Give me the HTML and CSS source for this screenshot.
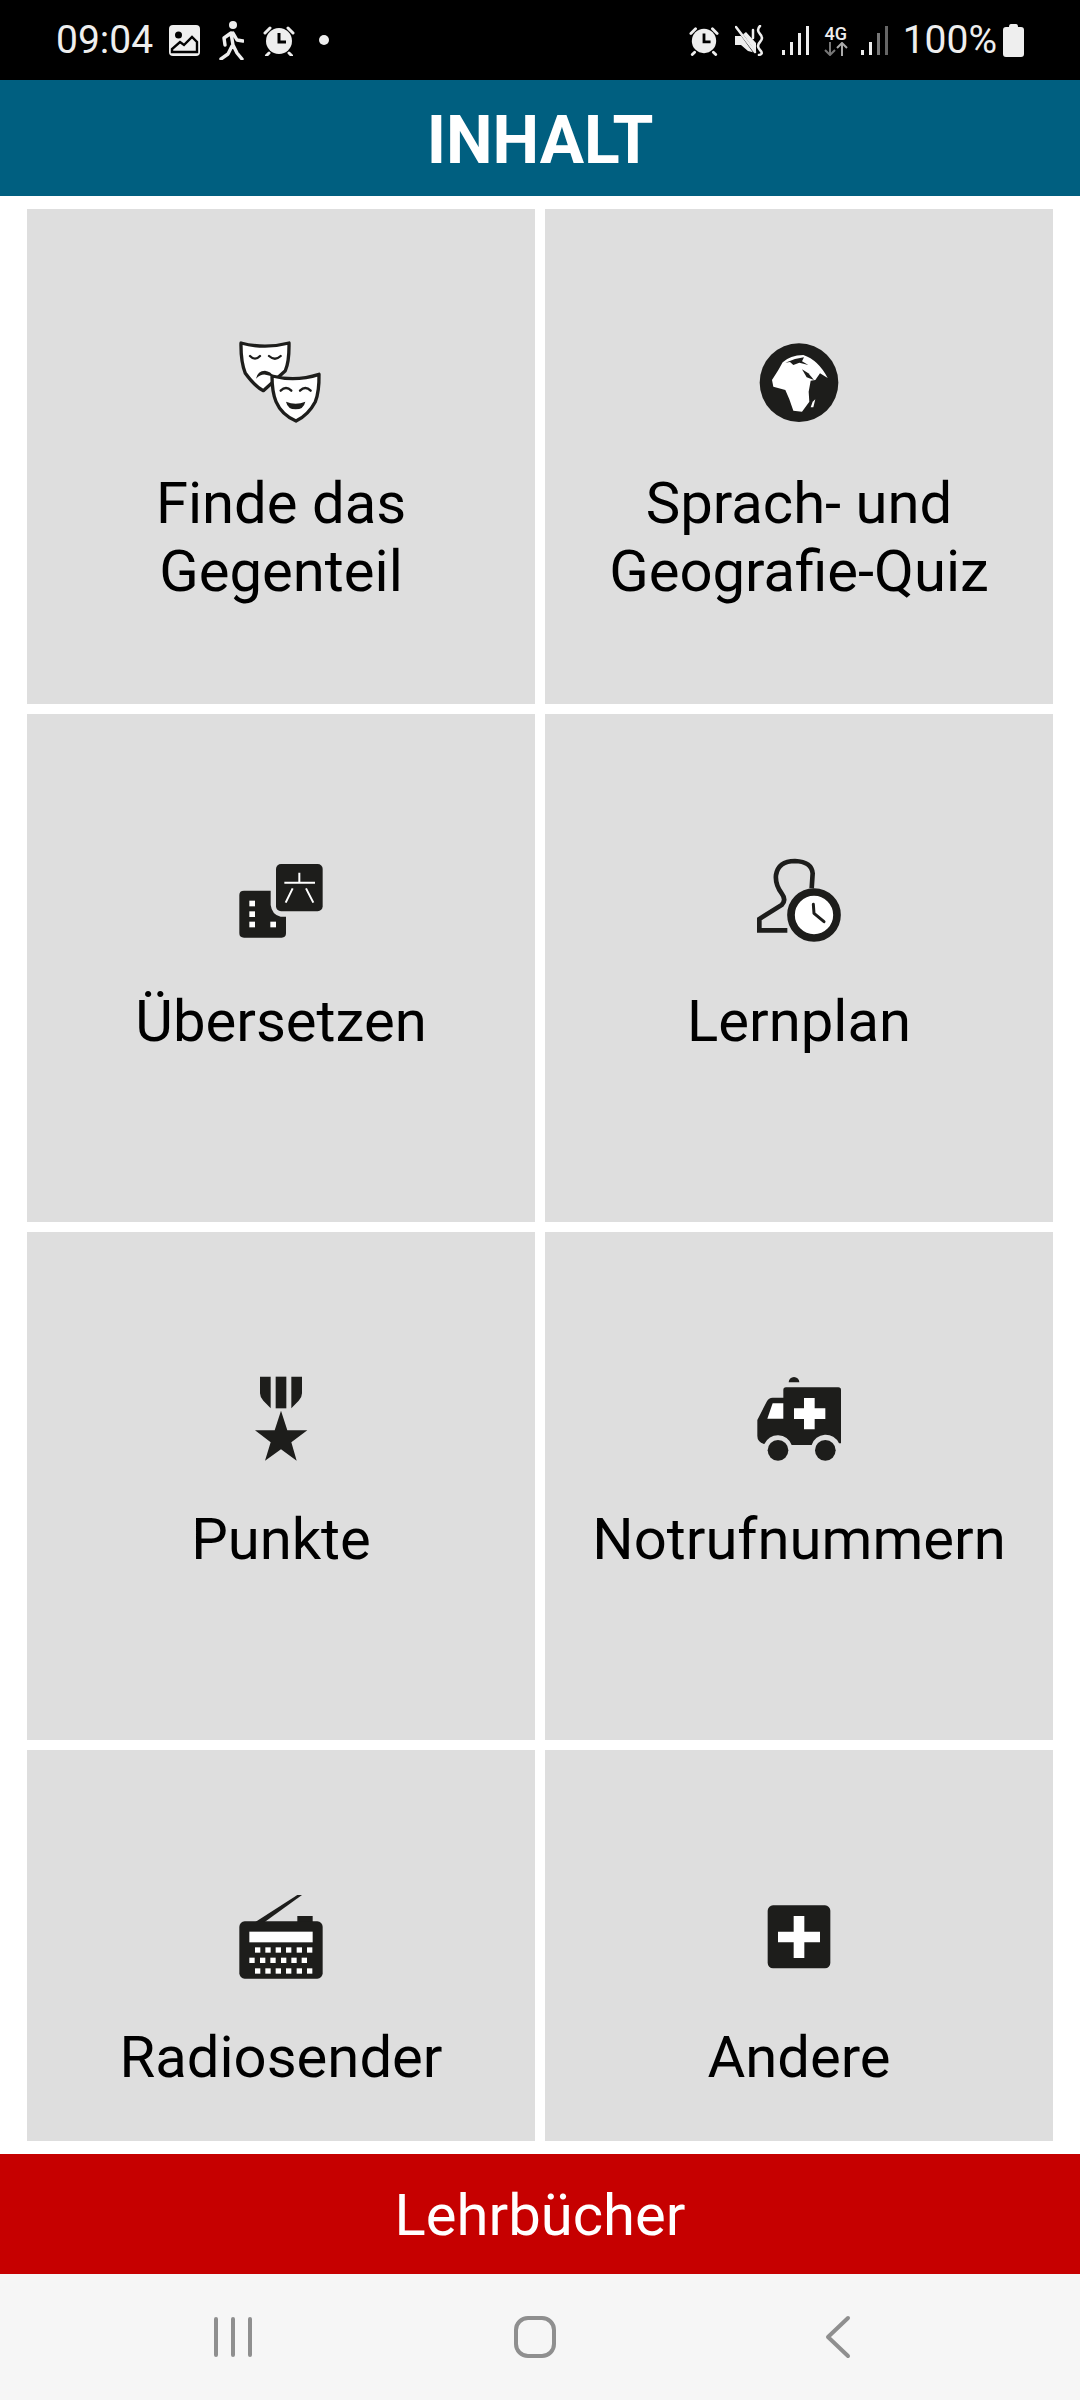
FILE: index.html
```html
<!DOCTYPE html>
<html lang="de">
<head>
  <meta charset="utf-8">
  <title>Inhalt</title>
  <link rel="stylesheet" href="styles.css">
</head>
<body>

  <!-- status bar -->
  <div class="status">
    <div class="status-left">
      <span class="time">09:04</span>
      <svg class="st-img" width="31" height="31" viewBox="0 0 31 31">
        <rect width="31" height="31" rx="4" fill="#eee"/>
        <circle cx="9.500" cy="10" r="3.500" fill="#000"/>
        <path d="M3 27V24L11 17L15 20L23 12L28 17V27Z" fill="none" stroke="#000" stroke-width="2.400"/>
      </svg>
      <svg class="st-walk" width="25" height="39" viewBox="0 0 25 39" fill="none" stroke="#eee" stroke-width="3.400" stroke-linecap="round" stroke-linejoin="round">
        <circle cx="14" cy="4" r="4" fill="#eee" stroke="none"/>
        <path d="M12 12L14 24L18 32L23 38M13 25L9 33L2 38M12 12L5 17L6 24M14 12L18 19L24 20" />
      </svg>
      <svg class="st-alarm" width="32" height="31" viewBox="0 0 32 31">
        <use href="#alarm"/>
      </svg>
      <span class="dot"></span>
    </div>
    <div class="status-right">
      <svg width="30" height="31" viewBox="0 0 32 31">
        <defs>
          <g id="alarm">
            <circle cx="16" cy="16" r="13" fill="#eee"/>
            <path d="M16 8V17H23" fill="none" stroke="#000" stroke-width="3"/>
            <path d="M2 8L7 3M30 8L25 3M6 28L3.500 30.500M26 28L28.500 30.500" fill="none" stroke="#eee" stroke-width="3" stroke-linecap="round"/>
          </g>
        </defs>
        <use href="#alarm"/>
      </svg>
      <svg class="st-mute" width="30" height="31" viewBox="0 0 30 31">
        <path d="M0 11H6L11 7L21 18V28L13 26L6 20H0Z" fill="#eee"/>
        <path d="M2 3L20 28" stroke="#000" stroke-width="2.500"/>
        <path d="M1 2L20 27" stroke="#eee" stroke-width="2.500" stroke-linecap="round"/>
        <path d="M25 1Q21 5 25 9T25 17T25 25T24 30M18 5V13" fill="none" stroke="#eee" stroke-width="2.500" stroke-linecap="round"/>
      </svg>
      <svg class="st-signal" width="28" height="29" viewBox="0 0 28 29">
        <rect x="0" y="24" width="3" height="5" fill="#eee"/>
        <rect x="8" y="16" width="3" height="13" fill="#eee"/>
        <rect x="16" y="7" width="3" height="22" fill="#eee"/>
        <rect x="24" y="0" width="3" height="29" fill="#eee"/>
      </svg>
      <div class="net">
        <span class="net-label">4G</span>
        <svg width="24" height="14" viewBox="0 0 24 14" fill="none" stroke="#777" stroke-width="2">
          <path d="M6 0V13M1 8L6 13L11 8"/>
          <path d="M18 14V1M13 6L18 1L23 6" stroke="#aaa"/>
        </svg>
      </div>
      <svg class="st-signal2" width="28" height="29" viewBox="0 0 28 29">
        <rect x="0" y="24" width="3" height="5" fill="#eee"/>
        <rect x="8" y="16" width="3" height="13" fill="#eee"/>
        <rect x="16" y="7" width="3" height="22" fill="#777"/>
        <rect x="24" y="0" width="3" height="29" fill="#666"/>
      </svg>
      <span class="battery-text">100%</span>
      <svg class="st-batt" width="21" height="33" viewBox="0 0 21 33">
        <path d="M6 3Q6 0 8 0H13Q15 0 15 3H18Q21 3 21 6V30Q21 33 18 33H3Q0 33 0 30V6Q0 3 3 3Z" fill="#eee"/>
      </svg>
    </div>
  </div>

  <div class="header">INHALT</div>

  <!-- menu -->
  <div class="grid">

    <div class="card card-first">
      <svg class="icon" viewBox="33 18 360 330">
        <path d="M93 69Q165 88 237 69Q238 125 226 152L160 212Q135 200 106 160Q92 125 93 69Z" fill="#fff" stroke="#1d1d1b" stroke-width="10" stroke-linejoin="round"/>
        <path d="M120 108Q135 124 150 108M177 108Q195 124 212 108" fill="none" stroke="#1d1d1b" stroke-width="7" stroke-linecap="round"/>
        <path d="M138 176Q143 152 165 152Q182 154 192 170L170 165Q155 160 138 176Z" fill="#1d1d1b"/>
        <path d="M186 168Q257 186 327 163Q328 215 316 245Q295 285 258 303Q215 285 198 245Q186 215 186 168Z" fill="#fff" stroke="#1d1d1b" stroke-width="10" stroke-linejoin="round"/>
        <path d="M212 212Q228 196 244 212M270 212Q286 196 302 212" fill="none" stroke="#1d1d1b" stroke-width="7" stroke-linecap="round"/>
        <path d="M228 245Q257 257 286 245Q281 268 257 268Q233 268 228 245Z" fill="#1d1d1b"/>
      </svg>
      <div class="label">Finde das<br>Gegenteil</div>
    </div>

    <div class="card card-first">
      <svg class="icon" viewBox="-3 18 360 330">
        <circle cx="177" cy="188" r="118" fill="#1d1d1b"/>
        <path d="M128 127Q150 106 190 105Q235 120 263 174L240 160L226 180L212 182L206 215L208 245L186 275L160 272L148 238L136 210L100 200L96 180L115 150Z" fill="#fff"/>
        <path d="M136 128L165 117L192 112L186 124L205 135L178 128L160 135L150 126Z" fill="#1d1d1b"/>
        <path d="M186 148L205 160L222 180L200 172Z" fill="#1d1d1b"/>
        <path d="M218 245L226 238L220 262L212 262Z" fill="#fff"/>
      </svg>
      <div class="label">Sprach- und<br>Geografie-Quiz</div>
    </div>

    <div class="card">
      <svg class="icon" viewBox="3 -18 360 330">
        <rect x="168" y="42" width="140" height="142" rx="15" fill="#1d1d1b"/>
        <path d="M238 68V98M193 98H285M218 115L197 158M258 115L280 158" fill="none" stroke="#fff" stroke-width="6"/>
        <path d="M72 122H152V165Q156 195 182 200H198V250Q198 263 185 263H72Q58 263 58 250V135Q58 122 72 122Z" fill="#1d1d1b"/>
        <rect x="88" y="152" width="17" height="17" fill="#fff"/>
        <rect x="88" y="184" width="17" height="17" fill="#fff"/>
        <rect x="88" y="215" width="17" height="17" fill="#fff"/>
        <rect x="151" y="215" width="17" height="17" fill="#fff"/>
      </svg>
      <div class="label">Übersetzen</div>
    </div>

    <div class="card">
      <svg class="icon" viewBox="-3 -3 360 330">
        <path d="M142 256H58V222L125 180Q140 165 125 145Q105 118 108 90Q115 48 165 48Q215 50 218 85L215 130" fill="none" stroke="#1d1d1b" stroke-width="14"/>
        <circle cx="222" cy="210" r="69" fill="#fff" stroke="#1d1d1b" stroke-width="23"/>
        <path d="M220 178L222 205L252 230" fill="none" stroke="#1d1d1b" stroke-width="9" stroke-linecap="round" stroke-linejoin="round"/>
      </svg>
      <div class="label">Lernplan</div>
    </div>

    <div class="card">
      <svg class="icon" viewBox="-27 6 360 330">
        <path d="M90 50H122V145L100 122Q90 112 90 100Z" fill="#1d1d1b"/>
        <rect x="137" y="50" width="32" height="95" fill="#1d1d1b"/>
        <path d="M216 50H184V145L206 122Q216 112 216 100Z" fill="#1d1d1b"/>
        <path d="M153 152L172 211H232L184 247L200 302L153 268L105 302L122 247L75 211H134Z" fill="#1d1d1b"/>
      </svg>
      <div class="label">Punkte</div>
    </div>

    <div class="card">
      <svg class="icon" viewBox="-3 6 360 330">
        <path d="M146 67a16 16 0 0 1 32 0Z" fill="#1d1d1b"/>
        <path d="M52 180L80 125Q86 113 98 113H130V90Q130 82 138 82H295Q303 82 303 90V250H297A44 44 0 0 0 215 255H155A44 44 0 0 0 73 252Q52 246 52 228Z" fill="#1d1d1b"/>
        <path d="M98 130H130V176H82Z" fill="#fff"/>
        <path d="M192 114H224V145H256V177H224V208H192V177H162V145H192Z" fill="#fff"/>
        <circle cx="114" cy="271" r="31" fill="#1d1d1b"/>
        <circle cx="256" cy="271" r="31" fill="#1d1d1b"/>
      </svg>
      <div class="label">Notrufnummern</div>
    </div>

    <div class="card">
      <svg class="icon" viewBox="3 0 360 330">
        <path d="M106 126L232 45H246L134 126Z" fill="#1d1d1b"/>
        <rect x="232" y="108" width="46" height="24" fill="#1d1d1b"/>
        <rect x="58" y="124" width="250" height="172" rx="16" fill="#1d1d1b"/>
        <rect x="88" y="155" width="190" height="32" fill="#fff"/>
        <g fill="#fff">
          <rect x="105" y="202" width="16" height="16"/><rect x="136" y="202" width="16" height="16"/><rect x="167" y="202" width="16" height="16"/><rect x="198" y="202" width="16" height="16"/><rect x="230" y="202" width="16" height="16"/><rect x="261" y="202" width="16" height="16"/>
          <rect x="88" y="233" width="16" height="16"/><rect x="120" y="233" width="16" height="16"/><rect x="151" y="233" width="16" height="16"/><rect x="183" y="233" width="16" height="16"/><rect x="214" y="233" width="16" height="16"/><rect x="245" y="233" width="16" height="16"/>
          <rect x="105" y="265" width="16" height="16"/><rect x="136" y="265" width="16" height="16"/><rect x="167" y="265" width="16" height="16"/><rect x="198" y="265" width="16" height="16"/><rect x="230" y="265" width="16" height="16"/><rect x="261" y="265" width="16" height="16"/>
        </g>
      </svg>
      <div class="label">Radiosender</div>
    </div>

    <div class="card">
      <svg class="icon" viewBox="-3 0 360 330">
        <rect x="83" y="76" width="188" height="189" rx="16" fill="#1d1d1b"/>
        <path d="M161 108H193V155H240V187H193V234H161V187H114V155H161Z" fill="#fff"/>
      </svg>
      <div class="label">Andere</div>
    </div>

  </div>

  <div class="books">Lehrbücher</div>

  <!-- android nav -->
  <div class="nav">
    <svg width="44" height="44" viewBox="0 0 44 44" fill="none" stroke="#8f8f8f" stroke-width="4" stroke-linecap="round">
      <path d="M5 4V40M22 4V40M39 4V40"/>
    </svg>
    <svg width="44" height="44" viewBox="0 0 44 44" fill="none" stroke="#8f8f8f" stroke-width="4">
      <rect x="3" y="3" width="38" height="38" rx="12"/>
    </svg>
    <svg width="44" height="44" viewBox="0 0 44 44" fill="none" stroke="#8f8f8f" stroke-width="4" stroke-linecap="round" stroke-linejoin="round">
      <path d="M33 3L13 22L33 41"/>
    </svg>
  </div>

</body>
</html>
```

FILE: styles.css
```css
body {
  margin: 0;
  width: 1080px;
  height: 2400px;
  background-color: #fff;
  font-family: "Roboto", sans-serif;
  overflow: hidden;
}

.status {
  display: flex;
  justify-content: space-between;
  align-items: center;
  height: 80px;
  background-color: #000;
  color: #eee;
  font-size: 39px;
}
.status-left {
  display: flex;
  align-items: center;
  gap: 19px;
  padding-left: 56px;
}
.status-right {
  display: flex;
  align-items: center;
  padding-right: 56px;
}
.st-img { margin-left: -3px; }
.st-mute { margin-left: 16px; }
.st-signal { margin-left: 17px; }
.net {
  display: flex;
  flex-direction: column;
  align-items: center;
  margin-left: 14px;
}
.net-label {
  font-size: 18px;
  font-weight: 500;
  line-height: 17px;
}
.st-signal2 { margin-left: 13px; }
.battery-text { margin-left: 14px; }
.st-batt { margin-left: 6px; }
.dot {
  width: 10px;
  height: 10px;
  border-radius: 50%;
  background-color: #eee;
  margin-left: 5px;
}

.header {
  height: 116px;
  line-height: 122px;
  background-color: #005f80;
  color: #fff;
  font-size: 66px;
  font-weight: 700;
  text-align: center;
}

.grid {
  display: grid;
  grid-template-columns: 508px 508px;
  grid-template-rows: 495px 508px 508px 391px;
  gap: 10px;
  padding: 13px 27px;
}
.card {
  display: flex;
  flex-direction: column;
  align-items: center;
  padding-top: 130px;
  background-color: #dedede;
  overflow: hidden;
}
.card-first {
  padding-top: 117px;
}
.icon {
  display: block;
  width: 120px;
  height: 110px;
  flex-shrink: 0;
}
.label {
  margin-top: 33px;
  font-size: 58px;
  line-height: 68px;
  color: #000;
  text-align: center;
  white-space: nowrap;
}

.books {
  height: 120px;
  line-height: 122px;
  background-color: #c60000;
  color: #fff;
  font-size: 58px;
  text-align: center;
}

.nav {
  display: grid;
  grid-template-columns: repeat(3, 302px);
  justify-items: center;
  align-items: center;
  height: 126px;
  padding: 0 82px;
  background-color: #f6f6f6;
}
```
